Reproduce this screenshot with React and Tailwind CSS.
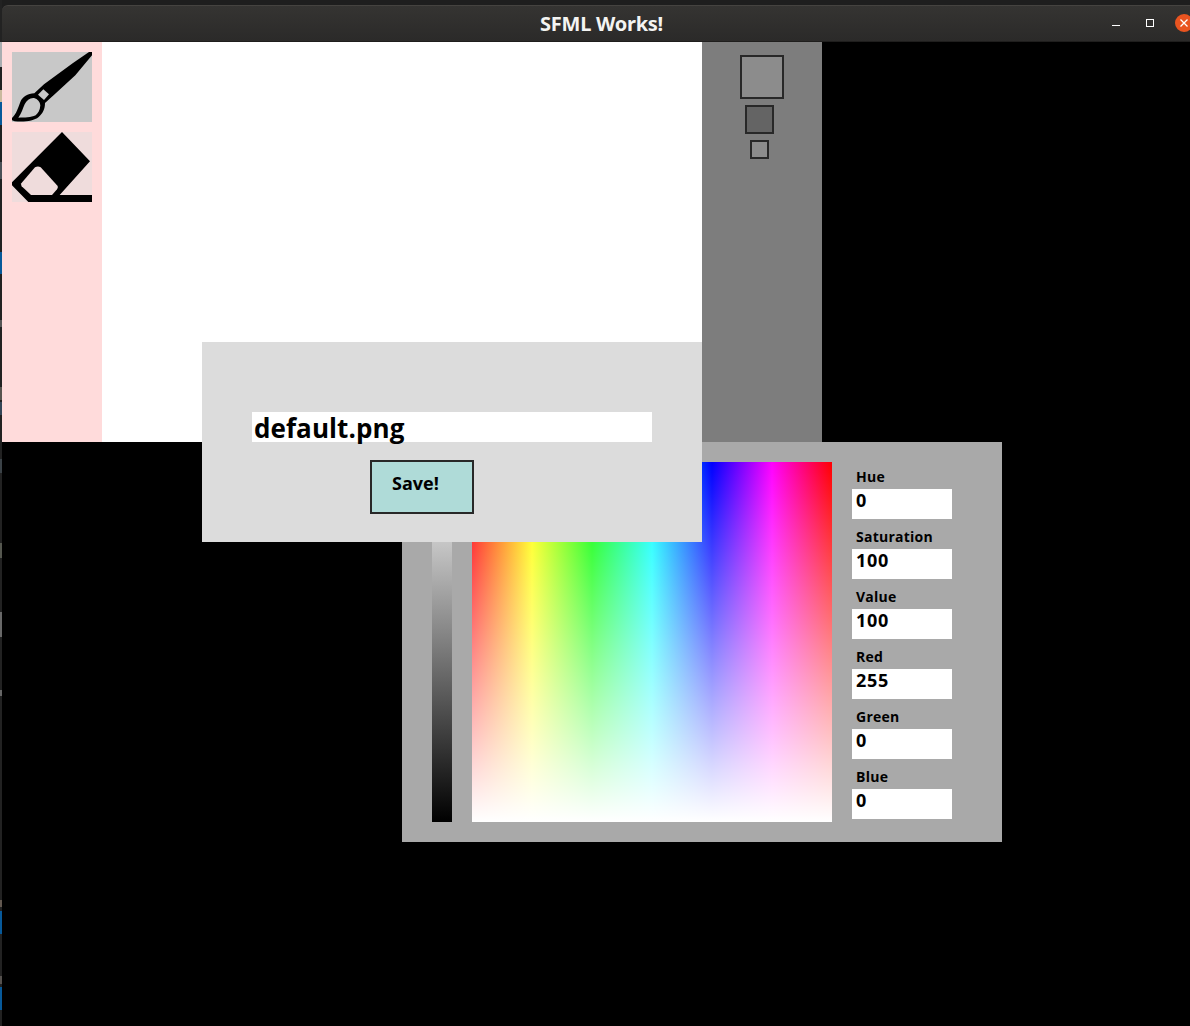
const fields = [
  ["Hue", "0"],
  ["Saturation", "100"],
  ["Value", "100"],
  ["Red", "255"],
  ["Green", "0"],
  ["Blue", "0"],
];

function BrushIcon() {
  return (
    <svg viewBox="0 0 240 210" className="block h-[70px] w-[80px] bg-[#c8c8c8]">
      <path d="M240 0H231L183 33L96 97L67 124C47 124 31 135 25 150C17 170 14 184 0 198V205L8 208C42 210 65 207 80 195C93 184 99 171 99 153L128 127L190 70L240 10Z" fill="#000" />
      <path d="M19 197C29 184 32 170 38 157C44 144 54 137 66 138C77 141 84 149 85 160C84 175 78 184 71 190C57 197 38 197 19 197Z" fill="#c8c8c8" />
      <path d="M78 128L94 112L111 127L96 144Z" fill="#c8c8c8" />
    </svg>
  );
}

function EraserIcon() {
  return (
    <svg viewBox="0 0 240 210" className="block h-[70px] w-[80px] bg-[#efdcdc]">
      <path d="M150 0L234 88L143 189H240V210H49L0 160V151Z" fill="#000" />
      <path d="M28 154L69 106Q78 101 86 106L137 162Q139 167 135 172L120 189H57L29 163Q26 158 28 154Z" fill="#efdcdc" />
    </svg>
  );
}

/* Sliver of the desktop that shows beside the window. */
function DesktopEdge() {
  return (
    <div className="flex h-full w-[2px] shrink-0 flex-col bg-[#222222]">
      <div className="mt-[42px] h-[25px] bg-[#a9adb0]" />
      <div className="mt-[23px] h-[12px] bg-[#c9b99d]" />
      <div className="h-[23px] bg-[#07599a]" />
      <div className="mt-[37px] h-[17px] bg-[#4b5056]" />
      <div className="mt-[73px] h-[22px] bg-[#07599a]" />
      <div className="mt-[46px] h-[7px] bg-[#555555]" />
      <div className="mt-[60px] h-[13px] bg-[#58544f]" />
      <div className="mt-[2px] h-[13px] bg-[#344657]" />
      <div className="mt-[44px] h-[14px] bg-[#3b4247]" />
      <div className="mt-[70px] h-[15px] bg-[#55574f]" />
      <div className="mt-[54px] h-[25px] bg-[#686868]" />
      <div className="mt-[53px] h-[6px] bg-[#666666]" />
      <div className="mt-[204px] h-[7px] bg-[#625850]" />
      <div className="mt-[4px] h-[23px] bg-[#07599a]" />
      <div className="mt-[42px] h-[8px] bg-[#55514e]" />
      <div className="mt-[3px] h-[23px] bg-[#07599a]" />
    </div>
  );
}

function TitleBar() {
  return (
    <div className="flex h-[37px] justify-between rounded-tl-[6px] border-t border-b border-t-[#454340] border-b-[#1f1e1d] bg-linear-to-b from-[#353432] to-[#2b2a29]">
      <h1 className="ml-[446px] w-[307px] text-center text-[20px] leading-[36px] font-bold tracking-[-0.25px] whitespace-nowrap text-[#f4f4f2] font-['Noto_Sans','Open_Sans',sans-serif]">
        SFML Works!
      </h1>
      <div className="flex w-[82px] overflow-hidden">
        <div className="mt-[19px] ml-[4px] h-[1px] w-[8px] shrink-0 bg-white" />
        <div className="mt-[13px] ml-[26px] size-[8px] shrink-0 border border-white" />
        <svg viewBox="0 0 18 18" className="mt-[8px] ml-[21px] size-[18px] shrink-0">
          <circle cx="9" cy="9" r="9" fill="#e95420" />
          <path d="M5.5 5.5L12.5 12.5M12.5 5.5L5.5 12.5" stroke="#fff" strokeWidth="1.3" />
        </svg>
      </div>
    </div>
  );
}

function ColorPicker() {
  return (
    <section className="ml-[400px] flex h-[400px] w-[600px] bg-[#a9a9a9]">
      <div className="mt-[20px] ml-[30px] h-[360px] w-[20px] bg-[linear-gradient(to_bottom,#fff,#000)]" />
      <div className="mt-[20px] ml-[20px] h-[360px] w-[360px] bg-[linear-gradient(to_bottom,rgba(255,255,255,0),#fff),linear-gradient(to_right,#f00,#ff0,#0f0,#0ff,#00f,#f0f,#f00)]" />
      <div className="ml-[20px] flex w-[100px] flex-col gap-2 pt-[25px]">
        {fields.map(([label, value]) => (
          <div key={label}>
            <div className="h-[22px] pl-[4px] text-[14px] leading-5 tracking-[0.25px]">{label}</div>
            <div className="h-[30px] bg-white pl-[4px] text-[18px] leading-[22px] tracking-[0.7px]">{value}</div>
          </div>
        ))}
      </div>
    </section>
  );
}

function SaveDialog() {
  return (
    <section className="absolute top-[300px] left-[200px] h-[200px] w-[500px] bg-[#dcdcdc] px-[50px] pt-[70px]">
      <div className="h-[30px] bg-white pl-[2px] text-[26px] leading-[32px] tracking-[0.08px]">default.png</div>
      <button className="mt-[18px] ml-[118px] block h-[54px] w-[104px] border-2 border-[#282828] bg-[#afdbd8] pl-[20px] text-left text-[18px] leading-[42px] font-bold">
        <span className="block h-[50px]">Save!</span>
      </button>
    </section>
  );
}

export default function App() {
  return (
    <div className="flex h-[1026px] w-[1190px] overflow-hidden bg-[#1e1e1e] font-bold text-black font-['Open_Sans','Noto_Sans',sans-serif]">
      <DesktopEdge />
      <div className="flex min-w-0 flex-1 flex-col pt-[5px]">
        <TitleBar />
        <main className="relative flex-1 bg-black">
          <div className="flex h-[400px]">
            <aside className="flex w-[100px] flex-col gap-[10px] bg-[#ffdbdb] p-[10px]">
              <BrushIcon />
              <EraserIcon />
            </aside>
            <div className="w-[600px] bg-white" />
            <aside className="flex w-[120px] flex-col items-start bg-[#7d7d7d] pt-[13px]">
              <div className="ml-[38px] size-[44px] border-2 border-[#282828] bg-[#8c8c8c]" />
              <div className="mt-[6px] ml-[43px] size-[29px] border-2 border-[#282828] bg-[#646464]" />
              <div className="mt-[6px] ml-[48px] size-[19px] border-2 border-[#282828] bg-[#8c8c8c]" />
            </aside>
          </div>
          <ColorPicker />
          <SaveDialog />
        </main>
      </div>
    </div>
  );
}
